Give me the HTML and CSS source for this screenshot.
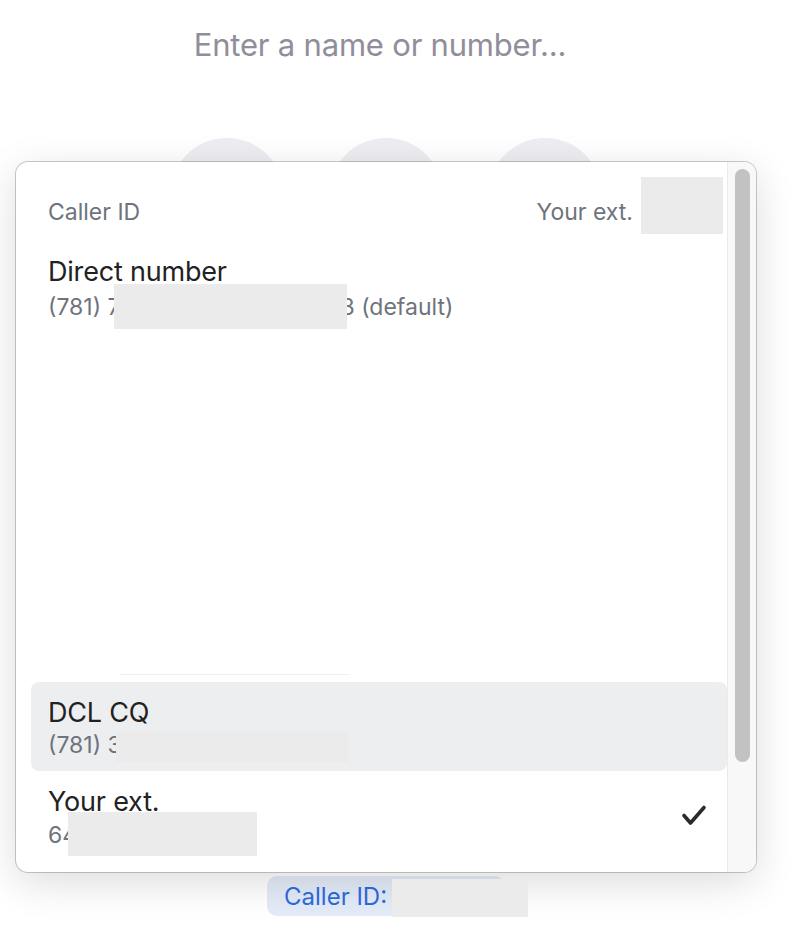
FILE: index.html
```html
<!DOCTYPE html>
<html lang="en">
<head>
  <meta charset="UTF-8">
  <meta name="viewport" content="width=device-width, initial-scale=1.0">
  <title>Dialer - Caller ID</title>
  <link rel="stylesheet" href="styles.css">
</head>
<body>
  <div class="dialer">
    <div class="search">Enter a name or number...</div>

    <div class="actions">
      <div class="action"></div>
      <div class="action"></div>
      <div class="action"></div>
    </div>

    <div class="footer">
      <div class="chip">
        <span class="chip-label">Caller ID:</span>
        <span class="chip-rest">(</span>
        <span class="redact chip-redact"></span>
      </div>
    </div>
  </div>

  <div class="menu">
    <div class="list">
      <div class="menu-head">
        <span class="head-label">Caller ID</span>
        <span class="head-ext">
          <span class="head-label">Your ext.</span>
          <span class="redact ext-redact"></span>
        </span>
      </div>

      <div class="option">
        <div class="option-text">
          <div class="option-name">Direct number</div>
          <div class="option-sub">(781) 7<span class="redact direct-redact"></span>3 (default)</div>
        </div>
      </div>

      <div class="hidden-space">
        <div class="divider"></div>
      </div>

      <div class="option hover">
        <div class="option-text">
          <div class="option-name">DCL CQ</div>
          <div class="option-sub">(781) 3<span class="redact dcl-redact"></span></div>
        </div>
      </div>

      <div class="option">
        <div class="option-text">
          <div class="option-name">Your ext.</div>
          <div class="option-sub">64<span class="redact ext2-redact"></span></div>
        </div>
        <svg class="check" width="26" height="24" viewBox="0 0 26 24">
          <path d="M3 11.5 L9.5 19 L23 3.5" fill="none" stroke="#2b2b2d" stroke-width="3.6" stroke-linecap="round" stroke-linejoin="round"/>
        </svg>
      </div>
    </div>

    <div class="scrollbar">
      <div class="thumb"></div>
    </div>
  </div>
</body>
</html>
```

FILE: styles.css
```css
* {
  margin: 0;
  padding: 0;
  box-sizing: border-box;
}

body {
  background: #fff;
  font-family: 'Inter', 'Noto Sans', sans-serif;
  color: #222;
  width: 794px;
  height: 936px;
  overflow: hidden;
  position: relative;
}

.dialer {
  width: 772px;
  height: 936px;
  display: flex;
  flex-direction: column;
  align-items: center;
}

.search {
  margin-top: 27px;
  margin-right: 12px;
  font-size: 31px;
  line-height: 36px;
  color: #8f8e9a;
  letter-spacing: -0.2px;
}

.actions {
  margin-top: 75px;
  display: flex;
  gap: 45px;
}

.action {
  width: 114px;
  height: 114px;
  border-radius: 50%;
  background: #eeedf2;
}

.footer {
  margin-top: auto;
  padding-bottom: 20px;
}

.chip {
  width: 238px;
  height: 40px;
  padding-left: 17px;
  border-radius: 10px;
  background: #e3ebf8;
  display: flex;
  align-items: center;
  font-size: 24px;
  color: #2d6bdc;
  white-space: nowrap;
}

.chip-rest {
  margin-left: 6px;
}

.redact {
  display: inline-block;
  background: #ebebeb;
  position: relative;
  z-index: 1;
}

.chip-redact {
  width: 136px;
  height: 38px;
  margin-left: -10px;
  margin-top: 4px;
  flex-shrink: 0;
}

/* caller id menu */
.menu {
  position: absolute;
  top: 162px;
  left: 16px;
  width: 740px;
  height: 710px;
  background: #fff;
  border-radius: 12px;
  box-shadow: 0 0 0 1px rgba(0, 0, 0, 0.2), 0 10px 40px rgba(0, 0, 0, 0.14);
  display: flex;
  overflow: hidden;
}

.list {
  flex: 1;
  padding-top: 1px;
}

.menu-head {
  height: 78px;
  display: flex;
  justify-content: space-between;
  align-items: flex-start;
  padding: 14px 4px 0 32px;
  font-size: 23px;
  line-height: 30px;
  color: #6e737c;
}

.head-label {
  display: inline-block;
  margin-top: 20px;
}

.head-ext {
  display: flex;
  align-items: flex-start;
}

.ext-redact {
  width: 82px;
  height: 57px;
  margin-left: 8px;
}

.option {
  margin-left: 15px;
  padding: 15px 20px 9px 17px;
  border-radius: 8px;
  display: flex;
  align-items: center;
  justify-content: space-between;
}

.option.hover {
  background: #edeef0;
}

.option-name {
  font-size: 27px;
  line-height: 32px;
  color: #222;
  letter-spacing: -0.2px;
}

.option-sub {
  font-size: 23px;
  line-height: 32px;
  color: #6e737c;
  white-space: nowrap;
}

.option-sub .redact {
  vertical-align: middle;
}

.direct-redact {
  width: 233px;
  height: 45px;
  margin-left: -7px;
  margin-right: -6px;
  margin-top: -4px;
}

.dcl-redact {
  width: 232px;
  height: 31px;
  margin-left: -6px;
}

.ext2-redact {
  width: 189px;
  height: 44px;
  margin-left: -9px;
  margin-top: -6px;
}

.hidden-space {
  height: 344px;
  display: flex;
  align-items: flex-end;
  padding-bottom: 7px;
}

.divider {
  margin-left: 103px;
  width: 231px;
  height: 1px;
  background: #eff0f2;
}

.check {
  margin-top: -11px;
}

.scrollbar {
  width: 29px;
  background: #f8f8f8;
  border-left: 1px solid #ebebeb;
  padding: 7px 6px 0 7px;
}

.thumb {
  height: 593px;
  border-radius: 8px;
  background: #c2c2c2;
}
```
